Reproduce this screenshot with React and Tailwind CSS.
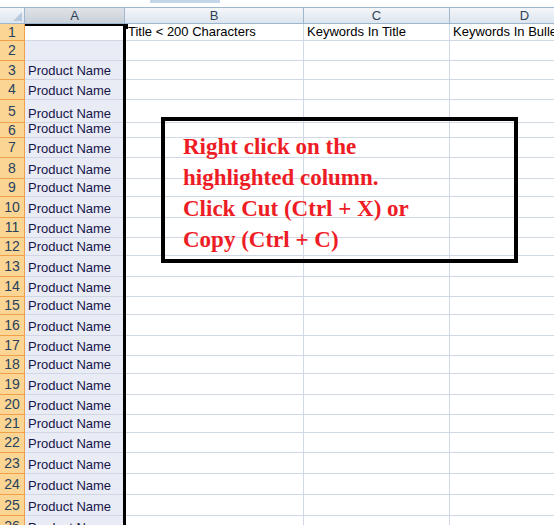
import React from 'react';

const heights = [17, 20, 19, 20, 23, 15, 20, 21, 18, 21, 20, 18, 21, 20, 18, 21, 20, 18, 21, 20, 18, 20, 21, 21, 21, 21];

const cols = [
  { name: 'B', w: 'w-[179px]' },
  { name: 'C', w: 'w-[146px]' },
  { name: 'D', w: 'w-[150px]' },
];

export default function App() {
  return (
    <div className="w-[554px] h-[525px] overflow-hidden bg-white relative font-[family-name:Liberation_Sans,Arial,sans-serif] text-[13px]">
      {/* top strip */}
      <div className="h-[8px] bg-white border-b border-[#9eb6ce] relative">
        <div className="absolute left-[150px] top-0 w-[70px] h-[3px] bg-[#c5d5ea]" />
      </div>
      {/* column header */}
      <div className="flex h-[16px] bg-gradient-to-b from-[#f4f6fa] to-[#dde5ef] border-b border-[#9eb6ce] text-[#2f3f55]">
        <div className="w-[25px] shrink-0 border-r border-[#9eb6ce] relative">
          <div className="absolute right-[2px] bottom-[2px] w-0 h-0 border-l-[9px] border-l-transparent border-b-[9px] border-b-[#b8c9dc]" />
        </div>
        <div className="w-[100px] shrink-0 border-r border-[#9eb6ce] bg-gradient-to-b from-[#dfe3e8] to-[#c9d0d8] flex items-center justify-center leading-none">A</div>
        {cols.map((c) => (
          <div key={c.name} className={`${c.w} shrink-0 border-r border-[#9eb6ce] flex items-center justify-center leading-none`}>{c.name}</div>
        ))}
      </div>
      {/* rows */}
      <div className="relative">
        {heights.map((h, i) => (
          <div key={i} className="flex" style={{ height: h }}>
            <div className="w-[25px] shrink-0 bg-[#fbd593] border-r border-b border-[#f0a04a] flex items-center justify-center text-[#27415e] text-[14px]">{i + 1}</div>
            <div className={`w-[100px] shrink-0 border-b border-[#d0d7e5] flex items-end pl-[3px] leading-[16px] text-[#15154a] whitespace-nowrap ${i === 0 ? 'bg-white' : 'bg-[#e9ebf5]'}`}>
              {i >= 2 ? 'Product Name' : ''}
            </div>
            <div className="w-[179px] shrink-0 border-r border-b border-[#d0d7e5] flex items-end pl-[3px] leading-[16px] whitespace-nowrap">
              {i === 0 ? 'Title < 200 Characters' : ''}
            </div>
            <div className="w-[146px] shrink-0 border-r border-b border-[#d0d7e5] flex items-end pl-[3px] leading-[16px] whitespace-nowrap">
              {i === 0 ? 'Keywords In Title' : ''}
            </div>
            <div className="w-[150px] shrink-0 border-b border-[#d0d7e5] flex items-end pl-[3px] leading-[16px] whitespace-nowrap overflow-hidden">
              {i === 0 ? 'Keywords In Bullets' : ''}
            </div>
          </div>
        ))}
        {/* selection outline */}
        <div className="absolute left-[123px] top-0 w-[3px] h-[520px] bg-black" />
        <div className="absolute left-[25px] top-0 w-[100px] h-[2px] bg-black" />
        <div className="absolute left-[123px] top-0 w-[5px] h-[5px] bg-black" />
        {/* callout */}
        <div className="absolute left-[161px] top-[93px] w-[357px] h-[146px] border-[4px] border-black pl-[18px] pt-[10px] font-[family-name:Liberation_Serif,Times_New_Roman,serif] font-bold text-[23px] leading-[31px] text-[#ee1c25]">
          <div>Right click on the</div>
          <div>highlighted column.</div>
          <div>Click Cut (Ctrl + X) or</div>
          <div>Copy (Ctrl + C)</div>
        </div>
      </div>
    </div>
  );
}
